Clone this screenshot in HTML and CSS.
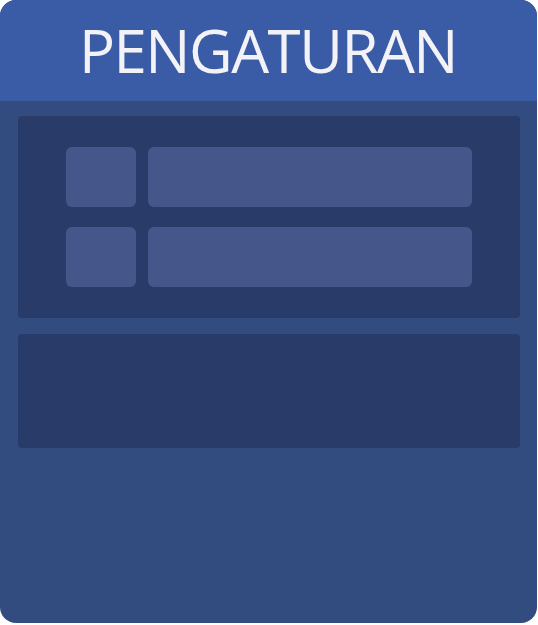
FILE: index.html
```html
<!DOCTYPE html>
<html lang="id">
<head>
  <meta charset="UTF-8" />
  <meta name="viewport" content="width=device-width, initial-scale=1.0"/>
  <title>Pengaturan</title>
  <link rel="stylesheet" href="styles.css">
</head>
<body>

<div class="card">
  <header>PENGATURAN</header>

  <main>
    <section class="panel panel-options">
      <div class="row">
        <div class="slot slot-small"></div>
        <div class="slot slot-wide"></div>
      </div>
      <div class="row">
        <div class="slot slot-small"></div>
        <div class="slot slot-wide"></div>
      </div>
    </section>

    <section class="panel panel-empty"></section>
  </main>
</div>

</body>
</html>
```

FILE: styles.css
```css
body {
  margin: 0;
  padding: 0;
  background: #ffffff;
  font-family: 'Open Sans', 'Noto Sans', sans-serif;
}

.card {
  width: 537px;
  height: 623px;
  background: #324c80;
  border-radius: 16px;
  overflow: hidden;
}

header {
  height: 101px;
  background: #3a5ba5;
  color: #f3f3f7;
  font-size: 60px;
  line-height: 101px;
  text-align: center;
  letter-spacing: -1.5px;
  text-indent: -1px;
}

main {
  display: flex;
  flex-direction: column;
  gap: 16px;
  padding: 15px 17px 0 18px;
}

.panel {
  background: #283b69;
  border-radius: 4px;
}

.panel-options {
  height: 202px;
  box-sizing: border-box;
  padding: 31px 48px;
  display: flex;
  flex-direction: column;
  gap: 20px;
}

.row {
  display: flex;
  gap: 12px;
  height: 60px;
}

.slot {
  background: #45578a;
  border-radius: 6px;
}

.slot-small {
  width: 70px;
}

.slot-wide {
  flex: 1;
}

.panel-empty {
  height: 114px;
}
```
